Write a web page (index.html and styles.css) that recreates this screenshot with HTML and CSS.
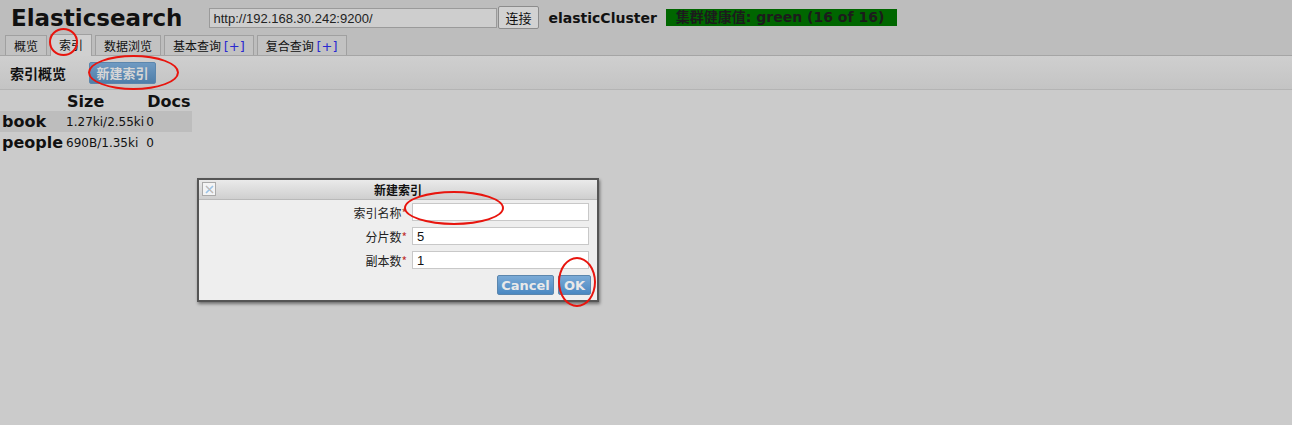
FILE: index.html
```html
<!DOCTYPE html>
<html lang="zh-CN">
<head>
    <meta charset="UTF-8">
    <title>Elasticsearch</title>
    <link rel="stylesheet" href="styles.css">
</head>
<body>
    <div class="header">
        <div class="top-row">
            <h1 class="logo">Elasticsearch</h1>
            <input class="url-input" value="http://192.168.30.242:9200/">
            <button class="connect-btn">连接</button>
            <span class="cluster-name">elasticCluster</span>
            <span class="health">集群健康值: green (16 of 16)</span>
        </div>
        <ul class="tabs">
            <li>概览</li>
            <li class="active">索引</li>
            <li>数据浏览</li>
            <li>基本查询 <span class="plus">[+]</span></li>
            <li>复合查询 <span class="plus">[+]</span></li>
        </ul>
    </div>

    <div class="toolbar">
        <span class="toolbar-title">索引概览</span>
        <button class="blue-btn new-index">新建索引</button>
    </div>

    <table class="overview">
        <tr class="head">
            <th></th>
            <th>Size</th>
            <th>Docs</th>
        </tr>
        <tr class="odd">
            <td class="name">book</td>
            <td>1.27ki/2.55ki</td>
            <td>0</td>
        </tr>
        <tr>
            <td class="name">people</td>
            <td>690B/1.35ki</td>
            <td>0</td>
        </tr>
    </table>

    <div class="dialog">
        <div class="dialog-title">
            <span class="close-icon">
                <svg width="11" height="11" viewBox="0 0 11 11">
                    <path d="M2 2 L9 9 M9 2 L2 9" stroke="#9cc3e6" stroke-width="1.6"/>
                    <path d="M2 2 L9 9" stroke="#e8b48c" stroke-width="0.8"/>
                </svg>
            </span>
            新建索引
        </div>
        <div class="dialog-body">
            <div class="field">
                <label>索引名称<span class="req">*</span></label>
                <input type="text" value="">
            </div>
            <div class="field">
                <label>分片数<span class="req">*</span></label>
                <input type="text" value="5">
            </div>
            <div class="field">
                <label>副本数<span class="req">*</span></label>
                <input type="text" value="1">
            </div>
            <div class="dialog-buttons">
                <button class="blue-btn cancel-btn">Cancel</button>
                <button class="blue-btn ok-btn">OK</button>
            </div>
        </div>
    </div>

    <!-- red annotation marks -->
    <div class="mark mark-tab"></div>
    <div class="mark mark-btn"></div>
    <div class="mark mark-name"></div>
    <div class="mark mark-ok"></div>
</body>
</html>
```

FILE: styles.css
```css
* {
    box-sizing: border-box;
}

body {
    margin: 0;
    background: #cbcbcb;
    font-family: "DejaVu Sans", Verdana, "Noto Sans CJK SC", sans-serif;
    font-size: 12px;
    color: #000;
    height: 425px;
    overflow: hidden;
}

.header {
    background: #bdbdbd;
    border-bottom: 1px solid #a5a5a5;
}

.top-row {
    display: flex;
    align-items: center;
    height: 35px;
    padding: 0 0 0 11px;
}

.logo {
    margin: 0 27px 0 0;
    font-size: 23px;
    font-weight: bold;
    color: #111;
}

.url-input {
    width: 288px;
    height: 20px;
    padding: 1px 3px;
    font-family: "Liberation Sans", Arial, sans-serif;
    font-size: 13px;
    color: #222;
    background: #cecece;
    border: 1px solid #9a9a9a;
    margin-top: 1px;
}

.connect-btn {
    height: 23px;
    margin-left: 1px;
    padding: 0 6px;
    font-family: "Noto Sans CJK SC", sans-serif;
    font-size: 13px;
    background: #d2d2d2;
    border: 1px solid #8c8c8c;
    border-radius: 2px;
    color: #111;
}

.cluster-name {
    margin-left: 10px;
    font-weight: bold;
    font-size: 14px;
    color: #111;
}

.health {
    margin-left: 9px;
    background: #006600;
    color: #1c1c1c;
    font-weight: bold;
    font-size: 14px;
    height: 17px;
    line-height: 17px;
    padding: 0 10px;
    width: 231px;
}

.tabs {
    list-style: none;
    margin: 0;
    padding: 0 0 0 5px;
    display: flex;
    align-items: flex-end;
    height: 20px;
    gap: 3px;
}

.tabs li {
    height: 20px;
    padding: 0 8px;
    border: 1px solid #a0a0a0;
    border-bottom: none;
    background: #c2c2c2;
    font-family: "Noto Sans CJK SC", sans-serif;
    font-size: 12px;
    line-height: 19px;
    color: #111;
}

.tabs li.active {
    background: #d0d0d0;
    height: 22px;
    margin-bottom: -1px;
}

.tabs .plus {
    color: #2a2ad0;
    font-family: "DejaVu Sans", sans-serif;
    font-size: 13px;
}

.toolbar {
    height: 34px;
    display: flex;
    align-items: center;
    padding-left: 10px;
    background: linear-gradient(#cfcfcf, #c4c4c4);
    border-bottom: 1px solid #b4b4b4;
}

.toolbar-title {
    font-family: "Noto Sans CJK SC", sans-serif;
    font-weight: bold;
    font-size: 14px;
    color: #111;
    margin-right: 23px;
}

.blue-btn {
    background: linear-gradient(#7aaad6, #4a88c2);
    border: 1px solid #5b86ad;
    border-radius: 2px;
    color: #e9e9e9;
    font-weight: bold;
    font-family: "DejaVu Sans", "Noto Sans CJK SC", sans-serif;
    font-size: 13px;
    padding: 0 6px;
}

.new-index {
    height: 22px;
    width: 67px;
    padding: 0;
    background: linear-gradient(#6f9ac2, #4f7ea9);
    color: #d6d6d6;
    font-family: "Noto Sans CJK SC", sans-serif;
}

.overview {
    border-collapse: collapse;
    margin-top: 1px;
}

.overview th {
    font-size: 16px;
    font-weight: bold;
    text-align: left;
    padding: 0 2px;
    height: 20px;
    color: #111;
}

.overview td {
    font-size: 12px;
    padding: 0 1px;
    height: 21px;
    color: #111;
}

.overview td.name {
    font-size: 16px;
    font-weight: bold;
    padding: 0 2px;
}

.overview tr.odd td {
    background: #bdbdbd;
}

.dialog {
    position: absolute;
    left: 197px;
    top: 178px;
    width: 402px;
    height: 124px;
    background: #eeeeee;
    border: 2px solid #555;
    box-shadow: 1px 2px 3px rgba(0, 0, 0, 0.45);
}

.dialog-title {
    position: relative;
    height: 20px;
    line-height: 19px;
    text-align: center;
    background: linear-gradient(#eaeaea, #cfcfcf);
    border-bottom: 1px solid #b9b9b9;
    font-family: "Noto Sans CJK SC", sans-serif;
    font-weight: bold;
    font-size: 12px;
    color: #111;
}

.close-icon {
    position: absolute;
    left: 3px;
    top: 2px;
    width: 14px;
    height: 14px;
    border: 1px solid #aaa;
    background: #f4f4f4;
    display: flex;
    align-items: center;
    justify-content: center;
}

.dialog-body {
    padding: 3px 8px 0 0;
}

.field {
    display: flex;
    justify-content: flex-end;
    align-items: center;
    margin-bottom: 6px;
}

.field label {
    font-family: "Noto Sans CJK SC", sans-serif;
    font-size: 12px;
    color: #222;
    margin-right: 5px;
}

.req {
    color: #c03030;
}

.field input {
    width: 177px;
    height: 18px;
    border: 1px solid #c8c8c8;
    background: #fff;
    font-family: "Liberation Sans", Arial, sans-serif;
    font-size: 13px;
    padding: 0 4px;
    color: #111;
}

.dialog-buttons {
    display: flex;
    justify-content: flex-end;
    gap: 4px;
    margin-top: 1px;
    margin-right: -2px;
}

.dialog-buttons .blue-btn {
    height: 20px;
    font-size: 13px;
    padding: 0;
}

.cancel-btn {
    width: 57px;
}

.ok-btn {
    width: 33px;
}

.mark {
    position: absolute;
    border: 2px solid #e8150e;
    border-radius: 50%;
}

.mark-tab {
    left: 49px;
    top: 28px;
    width: 29px;
    height: 28px;
}

.mark-btn {
    left: 88px;
    top: 55px;
    width: 91px;
    height: 35px;
}

.mark-name {
    left: 404px;
    top: 191px;
    width: 100px;
    height: 34px;
}

.mark-ok {
    left: 558px;
    top: 257px;
    width: 38px;
    height: 50px;
}
```
